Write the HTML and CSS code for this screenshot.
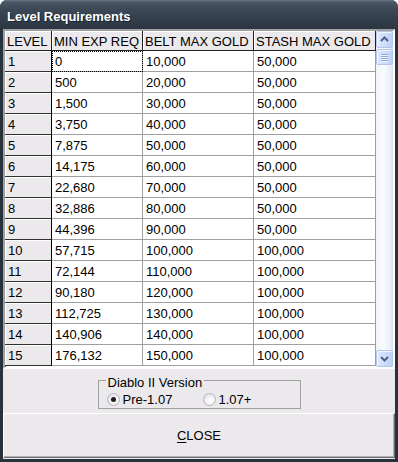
FILE: index.html
```html
<!DOCTYPE html>
<html>
<head>
<meta charset="utf-8">
<link rel="stylesheet" href="styles.css">
</head>
<body>
<div class="window">
  <div class="titlebar"><span class="title">Level Requirements</span></div>
  <div class="client">
    <div class="grid">
      <div class="table">
        <div class="hcell c1">LEVEL</div><div class="hcell">MIN EXP REQ</div><div class="hcell">BELT MAX GOLD</div><div class="hcell">STASH MAX GOLD</div>
        <div class="rcell">1</div><div class="cell focus">0</div><div class="cell">10,000</div><div class="cell">50,000</div>
        <div class="rcell">2</div><div class="cell">500</div><div class="cell">20,000</div><div class="cell">50,000</div>
        <div class="rcell">3</div><div class="cell">1,500</div><div class="cell">30,000</div><div class="cell">50,000</div>
        <div class="rcell">4</div><div class="cell">3,750</div><div class="cell">40,000</div><div class="cell">50,000</div>
        <div class="rcell">5</div><div class="cell">7,875</div><div class="cell">50,000</div><div class="cell">50,000</div>
        <div class="rcell">6</div><div class="cell">14,175</div><div class="cell">60,000</div><div class="cell">50,000</div>
        <div class="rcell">7</div><div class="cell">22,680</div><div class="cell">70,000</div><div class="cell">50,000</div>
        <div class="rcell">8</div><div class="cell">32,886</div><div class="cell">80,000</div><div class="cell">50,000</div>
        <div class="rcell">9</div><div class="cell">44,396</div><div class="cell">90,000</div><div class="cell">50,000</div>
        <div class="rcell">10</div><div class="cell">57,715</div><div class="cell">100,000</div><div class="cell">100,000</div>
        <div class="rcell">11</div><div class="cell">72,144</div><div class="cell">110,000</div><div class="cell">100,000</div>
        <div class="rcell">12</div><div class="cell">90,180</div><div class="cell">120,000</div><div class="cell">100,000</div>
        <div class="rcell">13</div><div class="cell">112,725</div><div class="cell">130,000</div><div class="cell">100,000</div>
        <div class="rcell">14</div><div class="cell">140,906</div><div class="cell">140,000</div><div class="cell">100,000</div>
        <div class="rcell">15</div><div class="cell">176,132</div><div class="cell">150,000</div><div class="cell">100,000</div>
      </div>
      <div class="vscroll">
        <div class="sbtn">
          <svg width="15" height="15" viewBox="0 0 15 15"><polyline points="4,9 7.5,5.5 11,9" fill="none" stroke="#4d6185" stroke-width="2"/></svg>
        </div>
        <div class="thumb"><span></span><span></span><span></span><span></span></div>
        <div class="track"></div>
        <div class="sbtn">
          <svg width="15" height="15" viewBox="0 0 15 15"><polyline points="4,6 7.5,9.5 11,6" fill="none" stroke="#4d6185" stroke-width="2"/></svg>
        </div>
      </div>
    </div>
    <div class="group">
      <span class="legend">Diablo II Version</span>
      <div class="radios">
        <label class="radio first"><span class="dot checked"></span>Pre-1.07</label>
        <label class="radio"><span class="dot"></span>1.07+</label>
      </div>
    </div>
    <div class="close"><span><u>C</u>LOSE</span></div>
  </div>
</div>
</body>
</html>
```
FILE: styles.css
```css
html, body {
  margin: 0;
  padding: 0;
  background: #ffffff;
}
body {
  width: 398px;
  height: 462px;
  font-family: "Liberation Sans", Arial, sans-serif;
  font-size: 13px;
  color: #000;
}
.window {
  width: 398px;
  height: 462px;
  box-sizing: border-box;
  background: #28323d;
  border-radius: 7px 7px 0 0;
  display: flex;
  flex-direction: column;
  overflow: hidden;
}
.titlebar {
  height: 29px;
  box-sizing: border-box;
  padding: 3px 0 0 7px;
  background: linear-gradient(#6b7784 0px, #4c5866 2px, #3e4a58 8px, #333f4c 18px, #2b3642 29px);
}
.title {
  display: block;
  line-height: 27px;
  font-weight: bold;
  font-size: 13px;
  color: #fff;
  text-shadow: 1px 1px 0 #1a222b;
}
.client {
  flex: 1;
  margin: 0 3px 3px 3px;
  background: #ece9ec;
  display: flex;
  flex-direction: column;
}
.grid {
  height: 340px;
  box-sizing: border-box;
  border-style: solid;
  border-width: 2px;
  border-color: #a0a0a0 #ffffff #ffffff #a0a0a0;
  box-shadow: inset 1px 1px 0 #555;
  display: flex;
  background: #fff;
}
.table {
  width: 371px;
  display: grid;
  grid-template-columns: 47px 91px 111px 122px;
  grid-template-rows: 20px repeat(15, 21px);
  align-content: start;
  overflow: hidden;
}
.hcell, .rcell, .cell {
  box-sizing: border-box;
  padding-left: 2px;
  white-space: nowrap;
  overflow: hidden;
}
.hcell {
  background: #ece9ec;
  border-right: 1px solid #202020;
  border-bottom: 1px solid #202020;
  box-shadow: inset 1px 1px 0 #fff;
  line-height: 19px;
  padding-top: 1px;
}
.rcell {
  background: #ece9ec;
  border-right: 1px solid #000;
  border-bottom: 1px solid #303030;
  box-shadow: inset 1px 1px 0 #fff;
  line-height: 18px;
  padding-top: 2px;
  padding-left: 3px;
}
.cell {
  background: #fff;
  border-right: 1px solid #a0a0a0;
  border-bottom: 1px solid #a0a0a0;
  line-height: 18px;
  padding-top: 2px;
  padding-left: 3px;
}
.cell.focus {
  outline: 1px dotted #000;
  outline-offset: -1px;
}
.vscroll {
  width: 17px;
  display: flex;
  flex-direction: column;
  background: linear-gradient(90deg, #f2f4fa 0%, #fafbfe 45%, #e9eff9 85%, #d7e2f6 100%);
}
.sbtn, .thumb {
  height: 17px;
  box-sizing: border-box;
  border: 1px solid #b3c6ea;
  border-radius: 2px;
  background: linear-gradient(90deg, #dce8fd 0%, #cfdefb 50%, #bdd0f4 100%);
  display: flex;
  align-items: center;
  justify-content: center;
  box-shadow: inset 1px 1px 0 #f2f6fe;
}
.sbtn svg {
  display: block;
}
.thumb {
  height: 16px;
  margin-top: 1px;
  flex-direction: column;
  gap: 1px;
}
.thumb span {
  display: block;
  width: 7px;
  height: 1px;
  background: #8ea6d4;
  box-shadow: 0 1px 0 #f2f6fe;
}
.track {
  flex: 1;
}
.group {
  align-self: center;
  width: 203px;
  height: 29px;
  box-sizing: border-box;
  margin-top: 11px;
  border: 1px solid #a0a0a0;
  display: flex;
  flex-direction: column;
}
.legend {
  align-self: flex-start;
  margin: -5px 0 0 7px;
  padding: 0 2px;
  line-height: 13px;
  background: #ece9ec;
}
.radios {
  display: flex;
  margin-top: 3px;
  padding-left: 8px;
  line-height: 15px;
}
.radio {
  display: flex;
  align-items: center;
  gap: 3px;
}
.radio.first {
  width: 96px;
}
.dot {
  width: 13px;
  height: 13px;
  box-sizing: border-box;
  border-radius: 50%;
  border: 1px solid #b6b4bb;
  background: radial-gradient(circle at 60% 60%, #ffffff 0%, #f1f1f1 45%, #d8d7dc 100%);
  display: flex;
  align-items: center;
  justify-content: center;
}
.dot.checked::after {
  content: "";
  width: 5px;
  height: 5px;
  border-radius: 50%;
  background: #1e1e1e;
}
.close {
  margin-top: auto;
  margin-bottom: 1px;
  height: 45px;
  box-sizing: border-box;
  border-style: solid;
  border-width: 1px;
  border-color: #ffffff #6e6d6f #6e6d6f #ffffff;
  box-shadow: inset -1px -1px 0 #b3b0b5;
  display: flex;
  align-items: center;
  justify-content: center;
  background: #ece9ec;
  font-size: 13px;
}
.close u {
  text-decoration: underline;
  text-underline-offset: 2px;
}
```
